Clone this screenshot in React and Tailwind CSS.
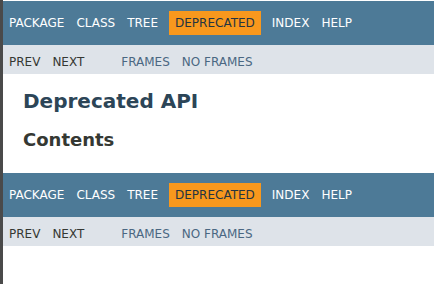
const topItems = ['Package', 'Class', 'Tree', 'Deprecated', 'Index', 'Help'];

function TopNav() {
  return (
    <div className="h-[44px] pt-[10px] bg-[#4d7a97] text-white text-[12px] leading-[normal] uppercase">
      <ul className="flex">
        {topItems.map((item) =>
          item === 'Deprecated' ? (
            <li key={item} className="px-[6px] py-[5px] mx-[5px] bg-[#f8981d] text-[#253441]">
              {item}
            </li>
          ) : (
            <li key={item} className="px-[6px] py-[5px]">
              {item}
            </li>
          )
        )}
      </ul>
    </div>
  );
}

function SubNav() {
  return (
    <div className="h-[29px] bg-[#dee3e9] text-[12px] leading-[normal] uppercase flex pt-[5px]">
      <ul className="flex mr-[25px] text-[#353833]">
        <li className="px-[6px] py-[5px]">Prev</li>
        <li className="px-[6px] py-[5px]">Next</li>
      </ul>
      <ul className="flex text-[#4a6782]">
        <li className="px-[6px] py-[5px]">Frames</li>
        <li className="px-[6px] py-[5px]">No Frames</li>
      </ul>
    </div>
  );
}

export default function App() {
  return (
    <div
      className="h-[284px] w-[434px] overflow-hidden bg-white border-l-[3px] border-[#4a4a4a] pt-px"
      style={{ fontFamily: '"DejaVu Sans", Arial, sans-serif' }}
    >
      <TopNav />
      <SubNav />
      <div className="mx-[20px] pt-[5px] pb-[23px]">
        <h1 className="mt-[10px] text-[20px] leading-[normal] font-bold text-[#2c4557]">Deprecated API</h1>
        <h2 className="mt-[16px] text-[18px] leading-[normal] font-bold text-[#353833]">Contents</h2>
      </div>
      <TopNav />
      <SubNav />
    </div>
  );
}
